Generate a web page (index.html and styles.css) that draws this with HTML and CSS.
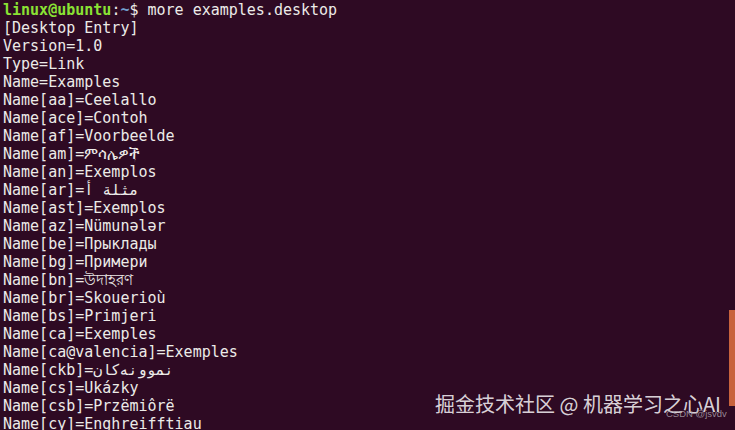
FILE: index.html
```html
<!DOCTYPE html>
<html>
<head>
<meta charset="utf-8">
<link rel="stylesheet" href="styles.css">
</head>
<body>
<div class="term">
  <div class="line"><span class="user">linux@ubuntu</span>:<span class="path">~</span>$ more examples.desktop</div>
  <div class="line">[Desktop Entry]</div>
  <div class="line">Version=1.0</div>
  <div class="line">Type=Link</div>
  <div class="line">Name=Examples</div>
  <div class="line">Name[aa]=Ceelallo</div>
  <div class="line">Name[ace]=Contoh</div>
  <div class="line">Name[af]=Voorbeelde</div>
  <div class="line">Name[am]=ምሳሌዎች</div>
  <div class="line">Name[an]=Exemplos</div>
  <div class="line">Name[ar]=أ&lrm; مثلة</div>
  <div class="line">Name[ast]=Exemplos</div>
  <div class="line">Name[az]=Nümunələr</div>
  <div class="line">Name[be]=Прыклады</div>
  <div class="line">Name[bg]=Примери</div>
  <div class="line">Name[bn]=উদাহরণ</div>
  <div class="line">Name[br]=Skouerioù</div>
  <div class="line">Name[bs]=Primjeri</div>
  <div class="line">Name[ca]=Exemples</div>
  <div class="line">Name[ca@valencia]=Exemples</div>
  <div class="line">Name[ckb]=نموونەکان</div>
  <div class="line">Name[cs]=Ukázky</div>
  <div class="line">Name[csb]=Przëmiôrë</div>
  <div class="line">Name[cy]=Enghreifftiau</div>
</div>
<div class="scrollbar"></div>
<div class="watermark">掘金技术社区 @ 机器学习之心AI</div>
<div class="csdn">CSDN @jsvdv</div>
</body>
</html>
```
FILE: styles.css
```css
html, body {
  margin: 0;
  padding: 0;
  background: #2e0a23;
  width: 735px;
  height: 430px;
  overflow: hidden;
}
.term {
  display: flex;
  flex-direction: column;
  padding: 1px 0 0 3px;
  font-family: "DejaVu Sans Mono", "Noto Sans", "Noto Sans CJK SC", monospace;
  font-size: 15px;
  line-height: 18px;
  color: #ecebe8;
}
.line {
  white-space: pre;
  height: 18px;
}
.user {
  color: #8ae234;
  font-weight: bold;
}
.path {
  color: #729fcf;
  font-weight: bold;
}
.scrollbar {
  position: absolute;
  left: 729px;
  top: 310px;
  width: 6px;
  height: 96px;
  background: #c8633d;
}
.watermark {
  position: absolute;
  left: 435px;
  top: 390px;
  font-family: "Noto Sans CJK SC", "Noto Sans", sans-serif;
  font-size: 20px;
  line-height: 28px;
  color: rgba(240, 236, 240, 0.9);
  white-space: nowrap;
}
.csdn {
  position: absolute;
  left: 666px;
  top: 408px;
  font-family: "Liberation Sans", sans-serif;
  font-size: 9.5px;
  line-height: 12px;
  color: rgba(170, 160, 170, 0.85);
  white-space: nowrap;
}
```
